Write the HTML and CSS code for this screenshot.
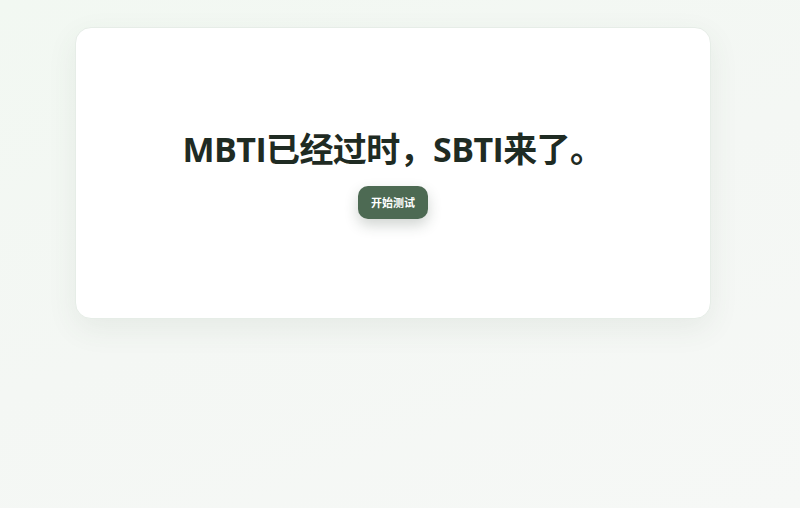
FILE: index.html
```html
<!DOCTYPE html>
<html lang="zh-CN">
<head>
  <meta charset="UTF-8" />
  <meta name="viewport" content="width=device-width, initial-scale=1.0"/>
  <title>SBTI</title>
  <link rel="stylesheet" href="styles.css">
</head>
<body>
  <div class="page">
    <div class="hero-card">
      <h1 class="hero-title">MBTI已经过时，SBTI来了。</h1>
      <button class="start-btn">开始测试</button>
    </div>
  </div>
</body>
</html>
```

FILE: styles.css
```css
* {
  box-sizing: border-box;
  margin: 0;
  padding: 0;
}

body {
  font-family: "Open Sans", "Noto Sans CJK SC", sans-serif;
  background: linear-gradient(160deg, #f2f8f2 0%, #f4f7f4 50%, #f6f8f6 100%);
  color: #1e2a22;
  min-height: 100vh;
}

.page {
  padding: 27px 89px 0 75px;
}

.hero-card {
  background: #fff;
  border: 1px solid #e6ede7;
  border-radius: 16px;
  height: 292px;
  box-shadow: 0 10px 30px rgba(60, 90, 65, 0.08);
  display: flex;
  flex-direction: column;
  align-items: center;
  justify-content: center;
  gap: 16px;
  padding-top: 2px;
}

.hero-title {
  font-size: 34px;
  font-weight: 700;
  letter-spacing: -0.6px;
  color: #1f2b23;
  line-height: 1.2;
}

.start-btn {
  font-family: inherit;
  background: #4d6a53;
  color: #fff;
  border: none;
  border-radius: 10px;
  font-size: 11px;
  font-weight: 700;
  padding: 0 13px;
  height: 33px;
  white-space: nowrap;
  box-shadow: 0 6px 14px rgba(40, 60, 45, 0.22);
  cursor: pointer;
}
```
